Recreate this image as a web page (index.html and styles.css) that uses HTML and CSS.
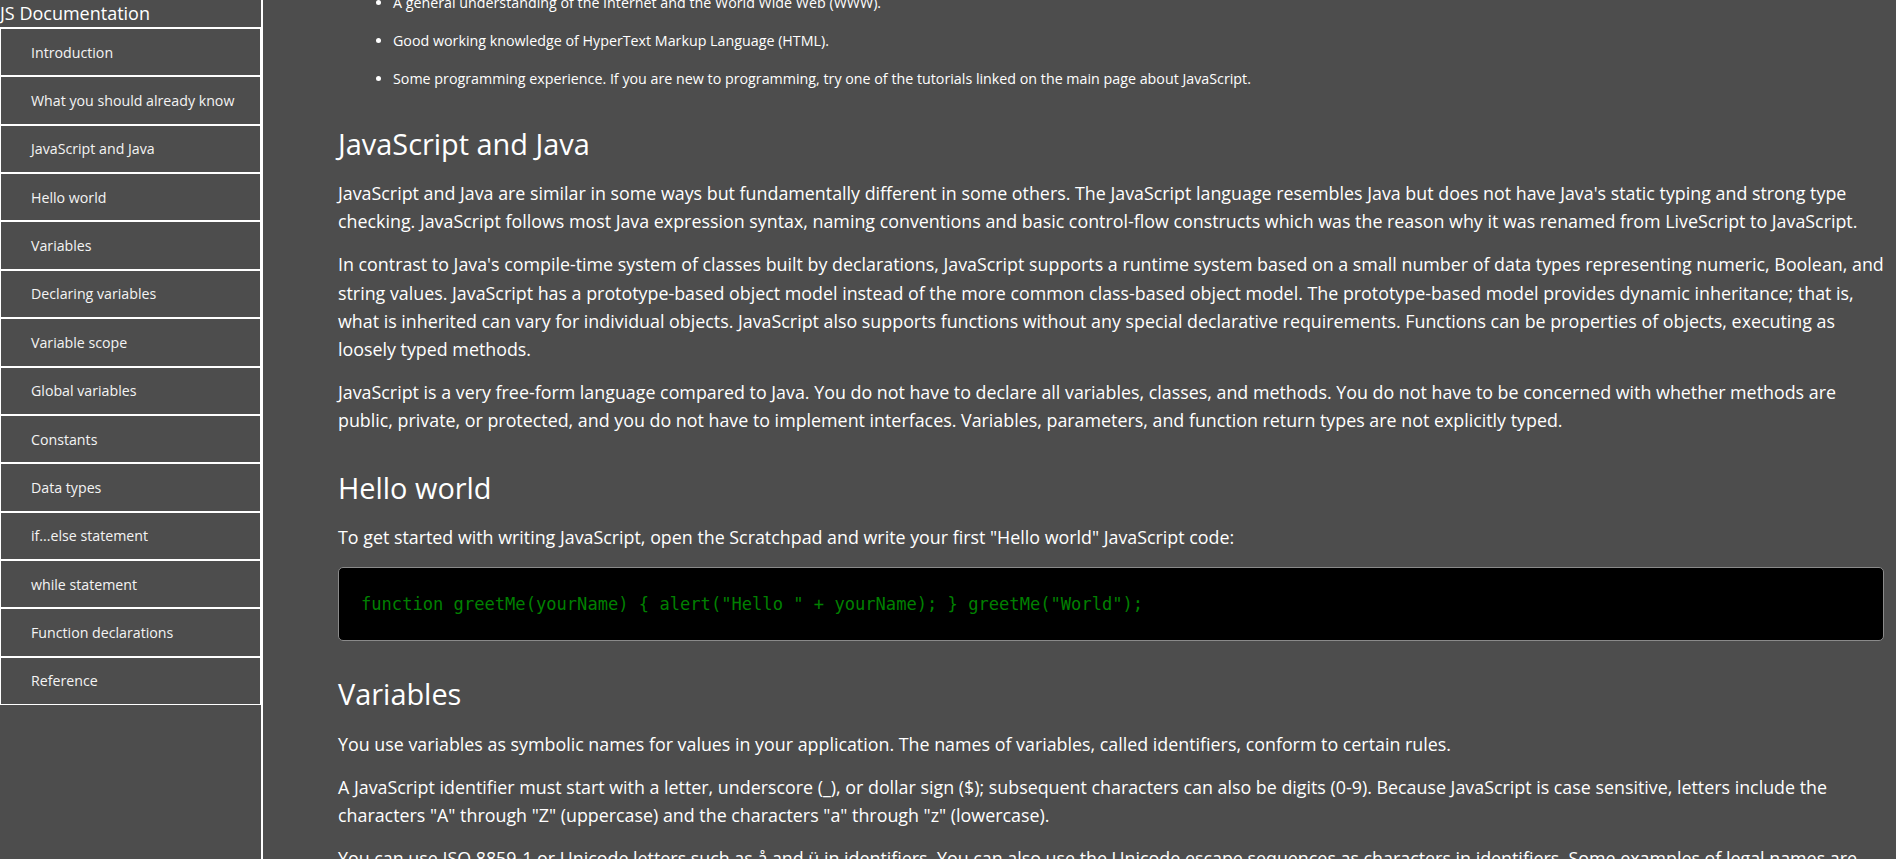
FILE: index.html
```html
<!DOCTYPE html>
<html lang="en">
<head>
<meta charset="utf-8">
<title>JS Documentation</title>
<link rel="stylesheet" href="styles.css">
</head>
<body>
<nav class="navbar">
  <header class="nav-header">JS Documentation</header>
  <a class="nav-link" href="#Introduction">Introduction</a>
  <a class="nav-link" href="#What_you_should_already_know">What you should already know</a>
  <a class="nav-link" href="#JavaScript_and_Java">JavaScript and Java</a>
  <a class="nav-link" href="#Hello_world">Hello world</a>
  <a class="nav-link" href="#Variables">Variables</a>
  <a class="nav-link" href="#Declaring_variables">Declaring variables</a>
  <a class="nav-link" href="#Variable_scope">Variable scope</a>
  <a class="nav-link" href="#Global_variables">Global variables</a>
  <a class="nav-link" href="#Constants">Constants</a>
  <a class="nav-link" href="#Data_types">Data types</a>
  <a class="nav-link" href="#if...else_statement">if...else statement</a>
  <a class="nav-link" href="#while_statement">while statement</a>
  <a class="nav-link" href="#Function_declarations">Function declarations</a>
  <a class="nav-link" href="#Reference">Reference</a>
</nav>
<main class="main-doc">
  <ul class="bg-list">
    <li>A general understanding of the Internet and the World Wide Web (WWW).</li>
    <li>Good working knowledge of HyperText Markup Language (HTML).</li>
    <li>Some programming experience. If you are new to programming, try one of the tutorials linked on the main page about JavaScript.</li>
  </ul>
  <section class="main-section" id="JavaScript_and_Java">
    <h2 class="sec-title">JavaScript and Java</h2>
    <p>JavaScript and Java are similar in some ways but fundamentally different in some others. The JavaScript language resembles Java but does not have Java's static typing and strong type checking. JavaScript follows most Java expression syntax, naming conventions and basic control-flow constructs which was the reason why it was renamed from LiveScript to JavaScript.</p>
    <p>In contrast to Java's compile-time system of classes built by declarations, JavaScript supports a runtime system based on a small number of data types representing numeric, Boolean, and string values. JavaScript has a prototype-based object model instead of the more common class-based object model. The prototype-based model provides dynamic inheritance; that is, what is inherited can vary for individual objects. JavaScript also supports functions without any special declarative requirements. Functions can be properties of objects, executing as loosely typed methods.</p>
    <p>JavaScript is a very free-form language compared to Java. You do not have to declare all variables, classes, and methods. You do not have to be concerned with whether methods are public, private, or protected, and you do not have to implement interfaces. Variables, parameters, and function return types are not explicitly typed.</p>
  </section>
  <section class="main-section" id="Hello_world">
    <h2 class="sec-title">Hello world</h2>
    <p>To get started with writing JavaScript, open the Scratchpad and write your first "Hello world" JavaScript code:</p>
    <code class="code-block">function greetMe(yourName) { alert("Hello " + yourName); } greetMe("World");</code>
  </section>
  <section class="main-section" id="Variables">
    <h2 class="sec-title">Variables</h2>
    <p>You use variables as symbolic names for values in your application. The names of variables, called identifiers, conform to certain rules.</p>
    <p>A JavaScript identifier must start with a letter, underscore (_), or dollar sign ($); subsequent characters can also be digits (0-9). Because JavaScript is case sensitive, letters include the characters "A" through "Z" (uppercase) and the characters "a" through "z" (lowercase).</p>
    <p>You can use ISO 8859-1 or Unicode letters such as å and ü in identifiers. You can also use the Unicode escape sequences as characters in identifiers. Some examples of legal names are Number_hits, temp99, and _name.</p>
  </section>
</main>
</body>
</html>
```
FILE: styles.css
```css
html, body {
  height: 100%;
  overflow: hidden;
}
body {
  margin: 0;
  display: flex;
  background: #4d4d4d;
  color: #fff;
  font-family: "Open Sans", "Noto Sans", sans-serif;
}
.navbar {
  flex: 0 0 261px;
  height: 100vh;
  border-right: 2px solid #fff;
  display: flex;
  flex-direction: column;
}
.nav-header {
  font-size: 18px;
  line-height: 27px;
  border-bottom: 1px solid #fff;
  color: #fff;
}
.nav-link {
  box-sizing: border-box;
  height: 48.36px;
  flex: 0 0 auto;
  display: flex;
  align-items: center;
  padding-left: 30px;
  border: 1px solid #fff;
  color: #f4f4f4;
  text-decoration: none;
  font-size: 14.2px;
}
.main-doc {
  flex: 1;
  min-width: 0;
  padding: 0 12px 0 75px;
}
.bg-list {
  margin: -8.4px 0 0;
  padding-left: 55px;
  font-size: 14.27px;
  line-height: 22px;
}
.bg-list li {
  margin-bottom: 16px;
}
.main-section p {
  font-size: 17.85px;
  line-height: 28.15px;
  margin: 15px 0;
}
.sec-title {
  font-size: 28.9px;
  font-weight: 400;
  line-height: 36px;
  margin: 35.5px 0 17.5px;
}
.main-section:first-of-type .sec-title {
  margin-top: 36px;
}
.code-block {
  display: block;
  margin: 15px 0;
  padding: 22px;
  border: 1px solid #8a8a8a;
  border-radius: 5px;
  background: #000;
  color: #008000;
  font-family: "DejaVu Sans Mono", "Liberation Mono", monospace;
  font-size: 17.1px;
  line-height: 28px;
}
```
